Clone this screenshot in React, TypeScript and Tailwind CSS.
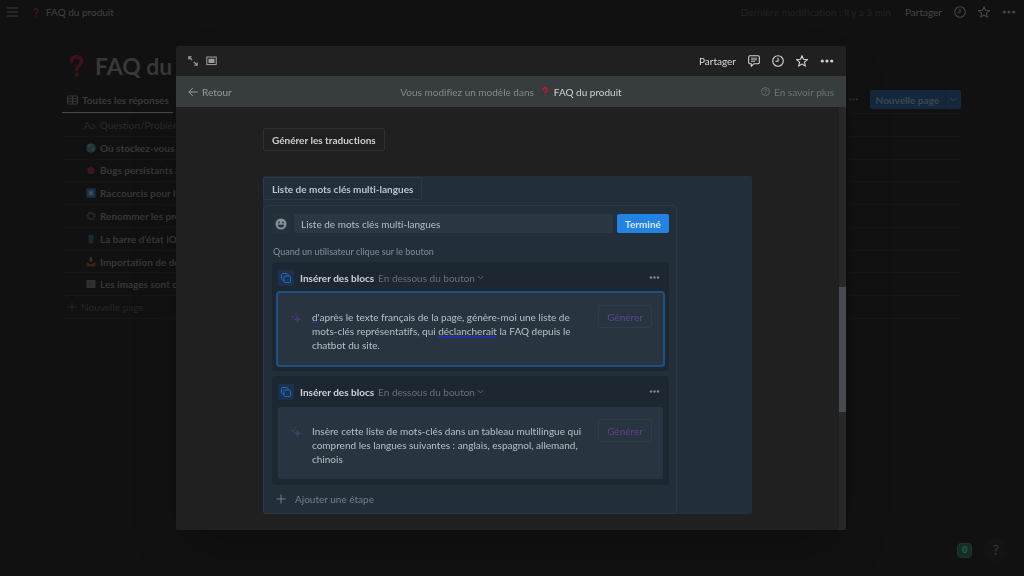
import type { ReactNode } from "react";

function QuestionMark({ className }: { className?: string }) {
  return (
    <svg viewBox="0 0 16 24" className={className} fill="none" aria-hidden="true">
      <path
        d="M2.500 7C2.500 3.600 5 2 8 2s5.500 1.700 5.500 5c0 4.200-5.300 4.400-5.300 9"
        stroke="currentColor"
        strokeWidth="3.800"
        strokeLinecap="round"
      />
      <circle cx="8.200" cy="21.300" r="2.300" fill="currentColor" />
    </svg>
  );
}

function Clock() {
  return (
    <svg viewBox="0 0 12 12" className="w-3 h-3" fill="none" stroke="currentColor" strokeWidth="1.100" aria-hidden="true">
      <circle cx="6" cy="6" r="5.300" />
      <path d="M6 2.800V6.300H3.400" />
    </svg>
  );
}

function Star() {
  return (
    <svg viewBox="0 0 12 12" className="w-3 h-3" fill="none" stroke="currentColor" strokeWidth="1.100" strokeLinejoin="round" aria-hidden="true">
      <path d="M6 .6l1.500 3.700 4 .3-3.100 2.600 1 3.900L6 9l-3.400 2.100 1-3.900L.5 4.600l4-.3z" />
    </svg>
  );
}

function Dots({ className }: { className: string }) {
  return (
    <svg viewBox="0 0 13 4" className={className} fill="currentColor" aria-hidden="true">
      <circle cx="1.800" cy="2" r="1.600" />
      <circle cx="6.500" cy="2" r="1.600" />
      <circle cx="11.200" cy="2" r="1.600" />
    </svg>
  );
}

function Chevron() {
  return (
    <svg viewBox="0 0 8 8" className="w-[7px] h-[7px]" fill="none" stroke="currentColor" strokeWidth="1.100" aria-hidden="true">
      <path d="M1 2.500l3 3 3-3" />
    </svg>
  );
}

function Plus() {
  return (
    <svg viewBox="0 0 10 10" className="w-[10px] h-[10px]" fill="none" stroke="currentColor" aria-hidden="true">
      <path d="M5 .5v9M.5 5h9" />
    </svg>
  );
}

function Sparkles() {
  return (
    <svg viewBox="0 0 11 12" className="w-[11px] h-3 text-[#493a6e]" fill="currentColor" aria-hidden="true">
      <path d="M6.500 3l1.100 3.200 3.200 1.100-3.200 1.100-1.100 3.200-1.100-3.200-3.200-1.100 3.200-1.100z" />
      <path d="M1.900 2.400l.6 1.500 1.500.6-1.500.6-.6 1.500-.6-1.500L-.1 4.500l1.400-.6z" />
      <path d="M4.800 0l.4 1.100 1 .4-1 .4-.4 1-.4-1-1-.4 1-.4z" />
    </svg>
  );
}

const rows: { title: string; icon: ReactNode }[] = [
  {
    title: "Où stockez-vous les données ?",
    icon: (
      <>
        <circle cx="5" cy="5" r="4.800" fill="#1c3444" />
        <path d="M2 1.500l3-.8 1 1.600-1.500 2L2.500 5 1 3.500zM5.500 5L8 4.500l1.300 1-1.500 3L6 8.500z" fill="#2b4420" />
      </>
    ),
  },
  {
    title: "Bugs persistants après mise à jour",
    icon: (
      <>
        <ellipse cx="5" cy="5.500" rx="3.600" ry="3.800" fill="#3a161c" />
        <path d="M3.500 2L5 .8 6.500 2M1 4h1M8 4h1M1 7h1M8 7h1" stroke="#2b1517" fill="none" />
      </>
    ),
  },
  {
    title: "Raccourcis pour l'application",
    icon: (
      <>
        <rect x=".3" y=".3" width="9.400" height="9.400" rx="1" fill="#182f45" />
        <path d="M5 2v6M2.400 3.500l5.200 3M7.600 3.500l-5.200 3" stroke="#4a5661" />
      </>
    ),
  },
  {
    title: "Renommer les projets",
    icon: (
      <>
        <circle cx="5" cy="5" r="3.200" fill="none" stroke="#303234" />
        <circle cx="5" cy="5" r="4.300" fill="none" stroke="#2b2d2f" strokeDasharray="1.400 2" />
      </>
    ),
  },
  {
    title: "La barre d’état iOS",
    icon: <rect x="2.500" y=".8" width="5" height="8.600" rx=".6" fill="#182a38" />,
  },
  {
    title: "Importation de données",
    icon: (
      <>
        <path d="M.5 5.500h2l1 1.500h3l1-1.500h2v4h-9z" fill="#3d241b" />
        <path d="M4 0h2v2.500h1.500L5 5.200 2.500 2.500H4z" fill="#243a20" />
      </>
    ),
  },
  {
    title: "Les images sont cassées",
    icon: (
      <>
        <rect x=".5" y="1" width="9" height="8" fill="#332f2e" />
        <path d="M2 2.500h4V7L2 7.500z" fill="#1d3040" />
        <path d="M2 7.500l3-2 3 2z" fill="#432a21" />
      </>
    ),
  },
];

function Page() {
  return (
    <div className="min-h-screen flex flex-col">
      <header className="flex items-center justify-between h-6 pl-[7px] pr-2">
        <div className="flex items-center">
          <button aria-label="Menu" className="text-[#3f3f3f]">
            <svg viewBox="0 0 11 10" className="w-[11px] h-[10px]" stroke="currentColor" aria-hidden="true">
              <path d="M0 1h11M0 5h11M0 9h11" />
            </svg>
          </button>
          <a href="#" className="flex items-center ml-[15px] gap-[7px] text-[#424242]">
            <QuestionMark className="w-[6px] h-[9px] text-[#48131b]" />
            FAQ du produit
          </a>
        </div>
        <div className="flex items-center text-[#454545]">
          <span className="text-[#232323] mr-[14px]">Dernière modification : Il y a 3 min</span>
          <button className="mr-3">Partager</button>
          <button aria-label="Historique" className="mr-3">
            <Clock />
          </button>
          <button aria-label="Favori" className="mr-3">
            <Star />
          </button>
          <button aria-label="Plus d'options">
            <Dots className="w-[14px] h-1" />
          </button>
        </div>
      </header>
      <main className="pl-[62px] pr-[63px] pt-6">
        <div className="flex items-center gap-[11px] h-9 pl-[7px]">
          <QuestionMark className="w-[15px] h-6 text-[#3d1218]" />
          <h1 className="text-[23px] leading-9 font-bold text-[#383838] whitespace-nowrap">FAQ du produit</h1>
        </div>
        <div className="flex items-end justify-between mt-[3px] border-b border-[#151515]">
          <button className="flex items-center gap-1 h-[26px] w-[111px] pl-[5px] border-b border-[#484848] font-bold text-[#3a3a3a] whitespace-nowrap">
            <svg viewBox="0 0 11 10" className="w-[11px] h-[10px] shrink-0" fill="none" stroke="currentColor" aria-hidden="true">
              <rect x=".5" y="1" width="10" height="8" rx="1" />
              <path d="M.5 3.700h10M.5 6.300h10M5.500 1v8" />
            </svg>
            Toutes les réponses
          </button>
          <div className="flex items-center mb-1 text-[#333638]">
            <button aria-label="Options de la vue" className="mr-3">
              <Dots className="w-[9px] h-[3px]" />
            </button>
            <button className="h-[19px] px-[6px] rounded-l-xs bg-[#14273c] font-bold text-[#3b4752]">Nouvelle page</button>
            <button aria-label="Modèles" className="flex items-center justify-center w-4 h-[19px] rounded-r-xs bg-[#14273c] border-l border-[#112134] text-[#3b4752]">
              <Chevron />
            </button>
          </div>
        </div>
        <div className="grid grid-rows-9 h-[205px] whitespace-nowrap">
          <div className="flex items-center gap-1 pl-[22px] border-b border-[#151515] text-[#2b2b2b]">
            <span>Aa</span>
            <span>Question/Problème</span>
          </div>
          {rows.map((row) => (
            <a href="#" key={row.title} className="flex items-center gap-1 pl-6 border-b border-[#151515] font-bold text-[#373737]">
              <svg viewBox="0 0 10 10" className="w-[10px] h-[10px]" aria-hidden="true">
                {row.icon}
              </svg>
              {row.title}
            </a>
          ))}
          <button className="flex items-center gap-1 pl-[5px] border-b border-[#151515] text-[#262626]">
            <Plus />
            Nouvelle page
          </button>
        </div>
      </main>
      <footer className="flex items-center justify-end gap-3 mt-auto pr-4 pb-[14px]">
        <span className="flex items-center justify-center w-[15px] h-[15px] rounded-sm border border-[#27302c] bg-[#0d3027] text-[9px] font-bold text-[#3f5a50]">
          0
        </span>
        <button aria-label="Aide" className="w-6 h-6 rounded-full bg-[#131313] text-sm text-[#3e3e3e]">
          ?
        </button>
      </footer>
    </div>
  );
}

function Step({ active, children }: { active?: boolean; children: ReactNode }) {
  return (
    <section className="px-[6px] pb-[6px] rounded-sm bg-[#1c2732]">
      <div className="flex items-center h-[31px]">
        <span className="flex items-center justify-center w-4 h-4 rounded-xs bg-[#1b3150] text-[#2370b5]">
          <svg viewBox="0 0 10 10" className="w-[10px] h-[10px]" fill="none" stroke="currentColor" aria-hidden="true">
            <rect x="3" y="3" width="6.500" height="6.500" rx="1.300" />
            <path d="M2.800 7H2C1.100 7 .5 6.400.5 5.600V2C.5 1.100 1.100.5 2 .5h3.600C6.400.5 7 1.100 7 2v.8" />
          </svg>
        </span>
        <h3 className="ml-[6px] font-bold text-[#ccd4da]">Insérer des blocs</h3>
        <button className="flex items-center gap-[2px] ml-1 text-[#65717c]">
          En dessous du bouton
          <Chevron />
        </button>
        <button aria-label="Options de l'étape" className="ml-auto mr-[3px] text-[#7e8993]">
          <Dots className="w-[11px] h-[3px]" />
        </button>
      </div>
      <div className={active ? "h-[72px] p-[3px] rounded-xs bg-[#283440] ring-2 ring-[#1f5084]" : "h-[72px] p-[3px] rounded-xs bg-[#283440]"}>
        <div className="flex items-start h-full pl-[9px] pr-[7px] rounded-xs border border-[#2b3449]">
          <span className="mt-[15px]">
            <Sparkles />
          </span>
          <p className="mt-[13px] ml-[10px] leading-[14px] whitespace-nowrap text-[#b6c0c8]">{children}</p>
          <button className="ml-auto mt-2 h-[23px] w-[54px] shrink-0 rounded-xs border border-[#303c48] text-[#5c4590]">Générer</button>
        </div>
      </div>
    </section>
  );
}

function TemplateDialog() {
  return (
    <div className="fixed inset-0 py-[46px] pl-44 pr-[178px]">
      <div role="dialog" aria-label="Modèle" className="flex flex-col h-full rounded-xs overflow-hidden bg-[#202020] shadow-2xl">
        <div className="flex items-center h-[30px] shrink-0 px-3 text-[#d2d2d2]">
          <button aria-label="Ouvrir en pleine page" className="text-[#a0a0a0]">
            <svg viewBox="0 0 10 10" className="w-[10px] h-[10px]" fill="none" stroke="currentColor" strokeWidth="1.100" aria-hidden="true">
              <path d="M.8 3.600V.8h2.800M1 1l3.200 3.200M6.400 9.200h2.800V6.400M9 9L5.800 5.800" />
            </svg>
          </button>
          <button aria-label="Mode d'affichage" className="ml-2 text-[#a0a0a0]">
            <svg viewBox="0 0 11 10" className="w-[11px] h-[10px]" fill="none" stroke="currentColor" aria-hidden="true">
              <rect x=".8" y="1" width="9.400" height="7.600" />
              <rect x="3" y="3.200" width="5" height="3.200" fill="currentColor" />
            </svg>
          </button>
          <button className="ml-auto mr-3 text-[#dadada]">Partager</button>
          <button aria-label="Commentaires" className="mr-3">
            <svg viewBox="0 0 12 12" className="w-3 h-3" fill="none" stroke="currentColor" strokeWidth="1.100" aria-hidden="true">
              <path d="M2 .8h8c.8 0 1.300.5 1.300 1.300v5.300c0 .8-.5 1.300-1.300 1.300H6L3.300 11.200V8.700H2C1.200 8.700.7 8.200.7 7.400V2.100C.7 1.300 1.200.8 2 .8z" />
              <path d="M3 3.200h6M3 4.800h6M3 6.400h4" strokeWidth=".8" />
            </svg>
          </button>
          <button aria-label="Historique" className="mr-3">
            <Clock />
          </button>
          <button aria-label="Favori" className="mr-3">
            <Star />
          </button>
          <button aria-label="Plus d'options">
            <Dots className="w-[14px] h-1" />
          </button>
        </div>
        <div className="grid grid-cols-[1fr_auto_1fr] items-center h-[31px] shrink-0 px-3 bg-[#373c3f] text-[#85898b]">
          <button className="flex items-center gap-1 justify-self-start text-[#969a9c]">
            <svg viewBox="0 0 10 10" className="w-[10px] h-[10px]" fill="none" stroke="currentColor" aria-hidden="true">
              <path d="M9.500 5H.8M4.800 1L.8 5l4 4" />
            </svg>
            Retour
          </button>
          <div className="flex items-center">
            Vous modifiez un modèle dans
            <QuestionMark className="w-[6px] h-[9px] ml-2 mr-[6px] text-[#d0142f]" />
            <a href="#" className="text-[#d0d2d3]">
              FAQ du produit
            </a>
          </div>
          <a href="#" className="flex items-center gap-1 justify-self-end text-[#6c7173]">
            <svg viewBox="0 0 10 10" className="w-[9px] h-[9px]" fill="none" stroke="currentColor" aria-hidden="true">
              <circle cx="5" cy="5" r="4.400" />
              <path d="M3.600 4c0-.9.600-1.400 1.400-1.400s1.400.5 1.400 1.200C6.400 4.800 5 4.800 5 6M5 6.800v.8" />
            </svg>
            En savoir plus
          </a>
        </div>
        <div className="flex flex-1 min-h-0">
          <div className="flex-1 px-[87px] pt-[21px]">
            <button className="block h-[23px] px-2 rounded-xs border border-[#303030] font-bold text-[#cfcfcf]">
              Générer les traductions
            </button>
            <div className="mt-[25px] pt-px rounded-xs bg-[#222e3a]">
              <button className="block h-[23px] px-2 rounded-xs border border-[#2c3947] font-bold text-[#b9c6d1]">
                Liste de mots clés multi-langues
              </button>
              <div className="mt-[5px] max-w-[414px] pl-2 pr-[7px] pt-2 rounded-sm border border-[#2b3846]">
                <div className="flex gap-1">
                  <button aria-label="Icône du bouton" className="flex items-center justify-center w-[18px] h-[19px] rounded-xs bg-[#25323e]">
                    <svg viewBox="0 0 12 12" className="w-3 h-3" aria-hidden="true">
                      <circle cx="6" cy="6" r="5.500" fill="#87919a" />
                      <circle cx="4" cy="4.500" r=".9" fill="#25323e" />
                      <circle cx="8" cy="4.500" r=".9" fill="#25323e" />
                      <path d="M2.800 6.700h6.400C9 8.500 7.700 9.600 6 9.600S3 8.500 2.800 6.700z" fill="#25323e" />
                    </svg>
                  </button>
                  <input
                    aria-label="Nom du bouton"
                    defaultValue="Liste de mots clés multi-langues"
                    className="flex-1 min-w-0 h-[19px] px-[7px] rounded-xs bg-[#2b3743] text-[#b4bfc9] outline-none"
                  />
                  <button className="h-[19px] w-[52px] rounded-xs bg-[#2383e2] font-bold text-[#d9e8f7]">Terminé</button>
                </div>
                <h2 className="mt-[11px] mb-[2px] pl-px text-[9px] leading-4 font-medium text-[#7a8995]">
                  Quand un utilisateur clique sur le bouton
                </h2>
                <div className="flex flex-col gap-[5px]">
                  <Step active>
                    <span className="underline decoration-[#2430a8]">d</span>'après le texte français de la page, génère-moi une liste de
                    <br />
                    mots-clés représentatifs, qui{" "}
                    <span className="underline decoration-2 decoration-[#2430a8]">déclancherait</span> la FAQ depuis le
                    <br />
                    chatbot du site.
                  </Step>
                  <Step>
                    Insère cette liste de mots-clés dans un tableau multilingue qui
                    <br />
                    comprend les langues suivantes : anglais, espagnol, allemand,
                    <br />
                    chinois
                  </Step>
                </div>
                <button className="flex items-center gap-[9px] h-7 pl-1 text-[#73808b]">
                  <Plus />
                  Ajouter une étape
                </button>
              </div>
            </div>
          </div>
          <div className="w-[7px] pt-[180px] bg-[#282828]">
            <div className="h-[125px] bg-[#474c50]" />
          </div>
        </div>
      </div>
    </div>
  );
}

export default function App() {
  return (
    <div className="min-h-screen bg-[#111111] font-[Lato,sans-serif] text-[10px] leading-4 [font-variant-ligatures:none]">
      <Page />
      <TemplateDialog />
    </div>
  );
}
